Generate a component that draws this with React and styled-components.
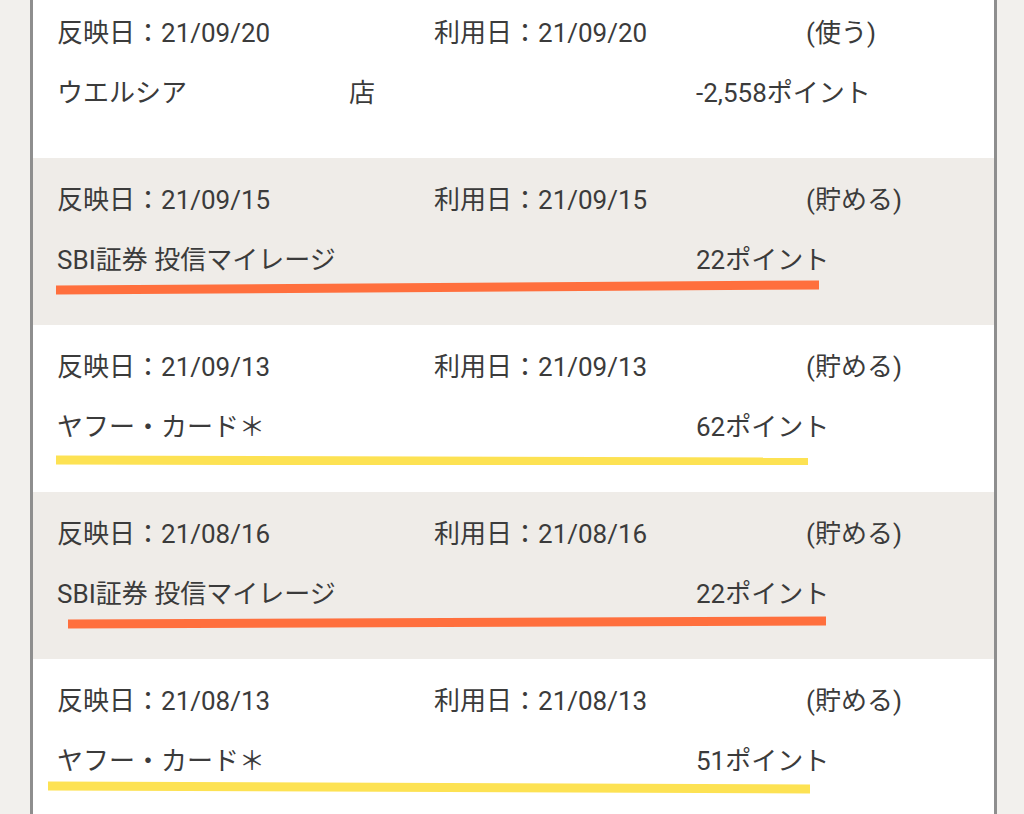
import styled, { createGlobalStyle } from "styled-components";

const GlobalStyle = createGlobalStyle`
  html, body {
    margin: 0;
    padding: 0;
    background: #f2f0ed;
    overflow: hidden;
  }
  body {
    font-family: Roboto, "Noto Sans CJK JP", sans-serif;
  }
`;

const Frame = styled.div`
  margin: -9px 27px 0 30px;
  border-left: 3px solid #8e8e8e;
  border-right: 3px solid #8e8e8e;
  height: 840px;
  overflow: hidden;
`;

const Row = styled.div`
  height: 167px;
  box-sizing: border-box;
  padding-top: 24px;
  background: ${(p) => (p.$shaded ? "#efece8" : "#ffffff")};
`;

const Line = styled.div`
  display: grid;
  grid-template-columns: ${(p) => p.$cols};
  padding-left: 24px;
  height: 36px;
  line-height: 36px;
  margin-bottom: ${(p) => (p.$gap ? "24px" : "0")};
  font-size: 26px;
  color: #3b3b3b;
  white-space: nowrap;
`;

const Blank = styled.span`
  display: inline-block;
  width: 162px;
`;

const Marker = styled.svg`
  display: block;
  width: 962px;
  height: 20px;
`;

const colors = { orange: "#ff6f3d", yellow: "#fde253" };

const rows = [
  {
    posted: "21/09/20",
    used: "21/09/20",
    kind: "(使う)",
    name: (
      <span>
        ウエルシア<Blank />店
      </span>
    ),
    points: "-2,558ポイント",
  },
  {
    posted: "21/09/15",
    used: "21/09/15",
    kind: "(貯める)",
    name: "SBI証券 投信マイレージ",
    points: "22ポイント",
    mark: { color: "orange", x1: 23, y1: 12, x2: 786, y2: 7 },
  },
  {
    posted: "21/09/13",
    used: "21/09/13",
    kind: "(貯める)",
    name: "ヤフー・カード＊",
    points: "62ポイント",
    mark: { color: "yellow", x1: 23, y1: 15, x2: 775, y2: 17 },
  },
  {
    posted: "21/08/16",
    used: "21/08/16",
    kind: "(貯める)",
    name: "SBI証券 投信マイレージ",
    points: "22ポイント",
    mark: { color: "orange", x1: 35, y1: 12, x2: 793, y2: 9 },
  },
  {
    posted: "21/08/13",
    used: "21/08/13",
    kind: "(貯める)",
    name: "ヤフー・カード＊",
    points: "51ポイント",
    mark: { color: "yellow", x1: 15, y1: 7, x2: 777, y2: 10 },
  },
];

function Underline({ mark }) {
  return (
    <Marker viewBox="0 0 962 20">
      <line
        x1={mark.x1}
        y1={mark.y1}
        x2={mark.x2}
        y2={mark.y2}
        stroke={colors[mark.color]}
        strokeWidth="9"
      />
    </Marker>
  );
}

export default function App() {
  return (
    <>
      <GlobalStyle />
      <Frame>
        {rows.map((r, i) => (
          <Row key={i} $shaded={i % 2 === 1}>
            <Line $cols="377px 372px 1fr" $gap>
              <span>反映日：{r.posted}</span>
              <span>利用日：{r.used}</span>
              <span>{r.kind}</span>
            </Line>
            <Line $cols="639px 1fr">
              <span>{r.name}</span>
              <span>{r.points}</span>
            </Line>
            {r.mark && <Underline mark={r.mark} />}
          </Row>
        ))}
      </Frame>
    </>
  );
}
